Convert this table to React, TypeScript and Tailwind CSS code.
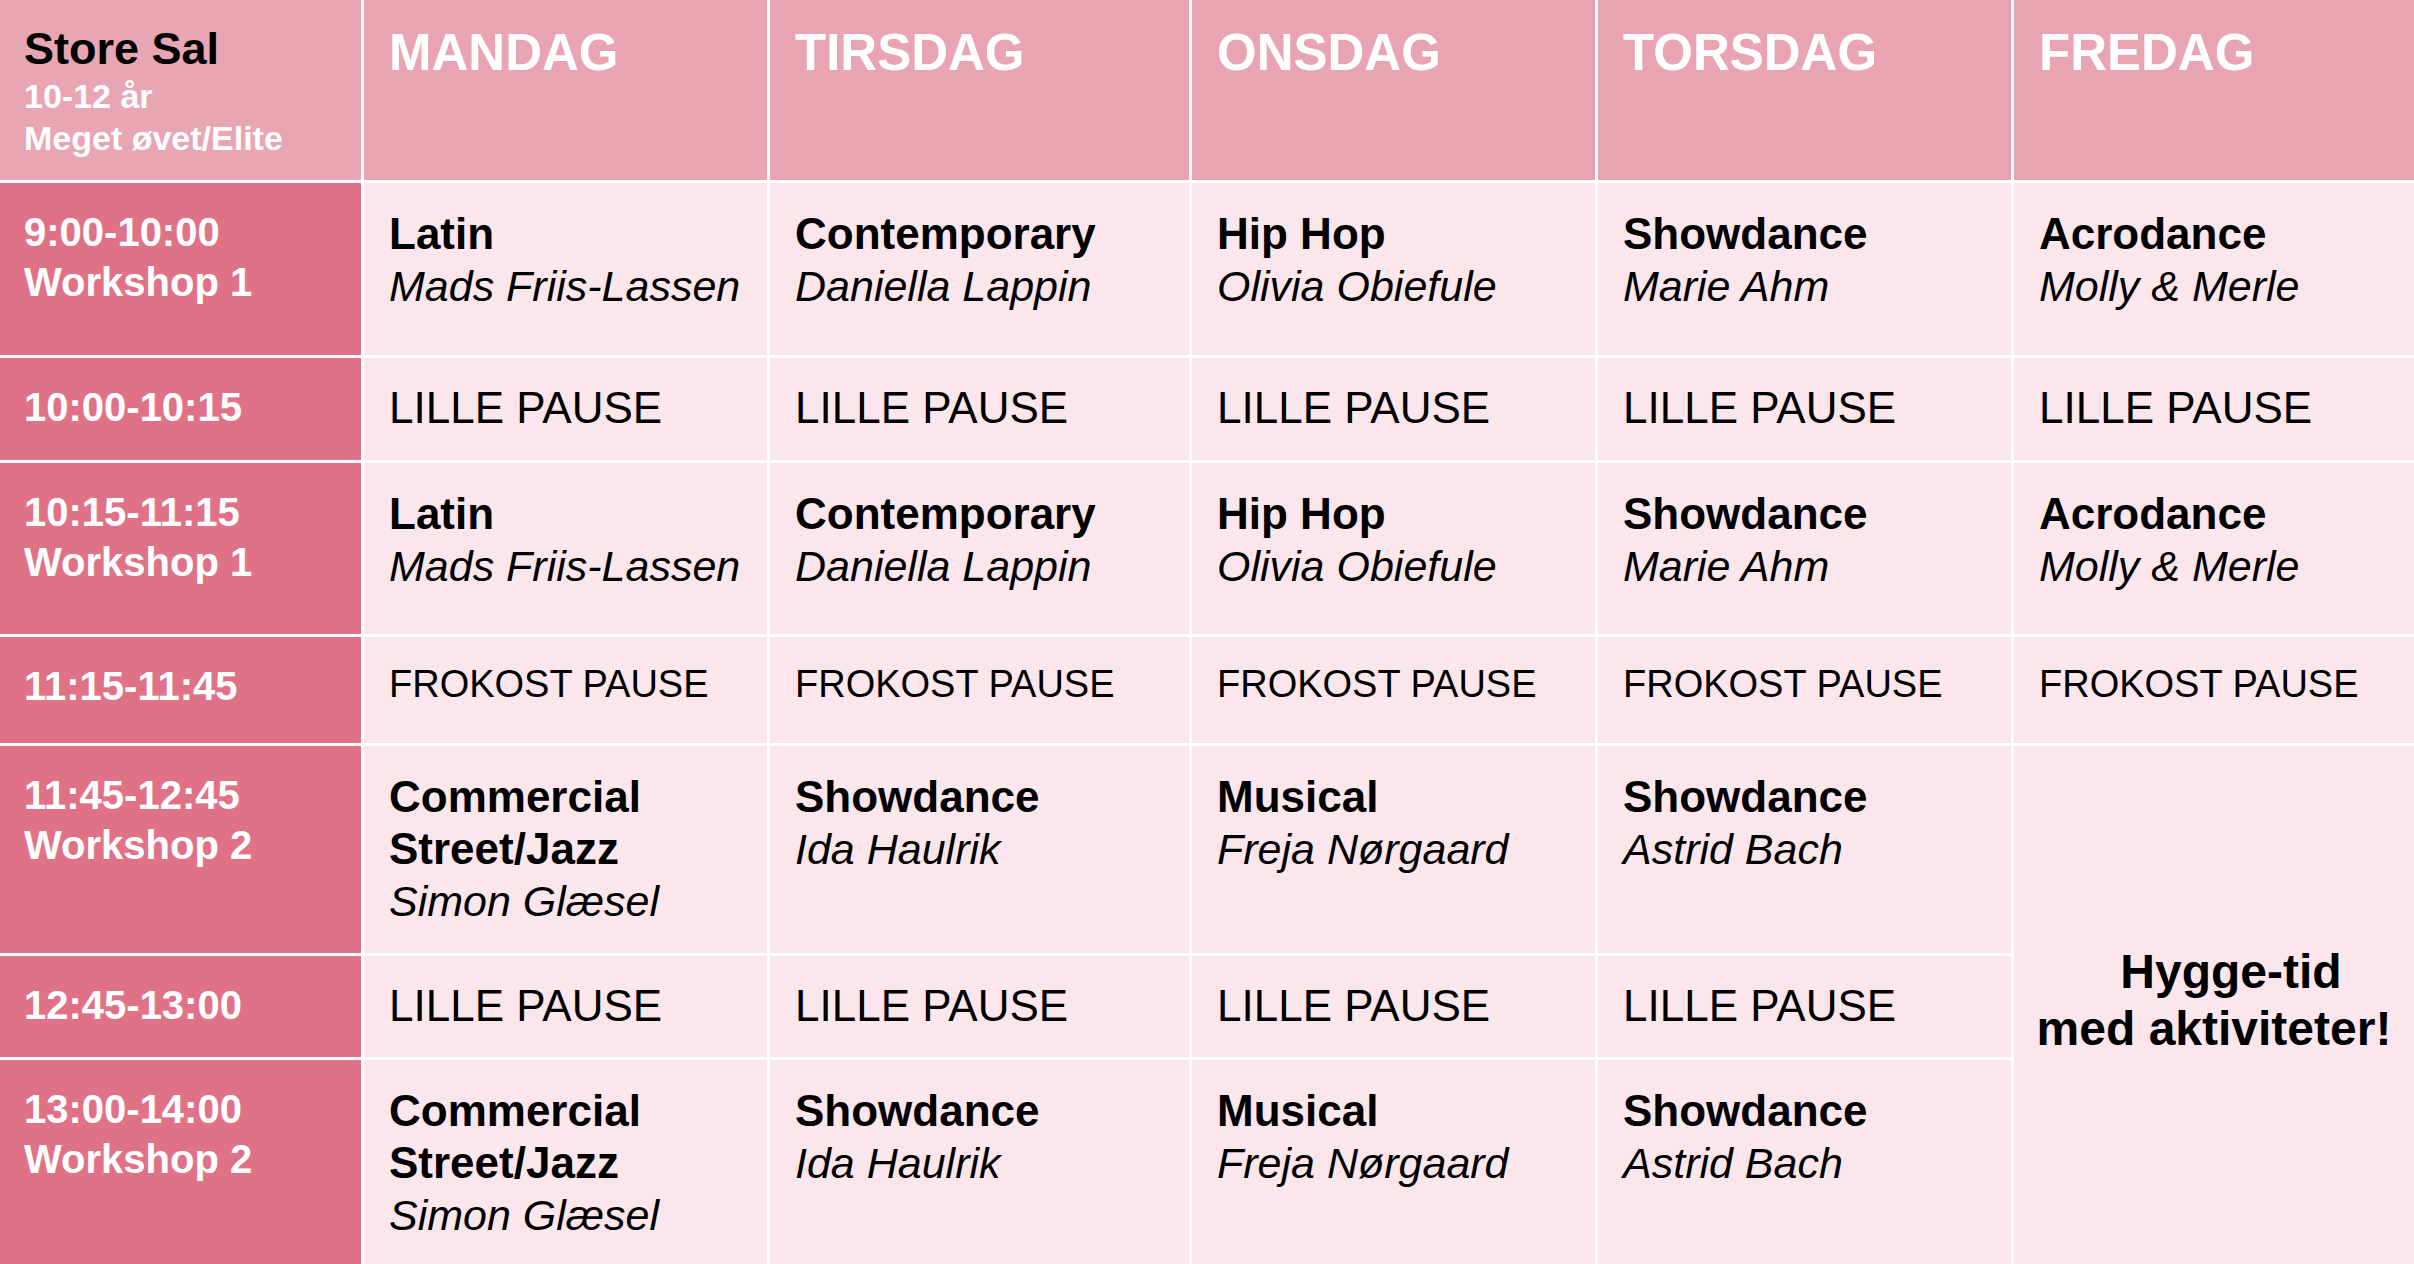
import React from "react";

type Cell =
  | { kind: "class"; title: string[]; teacher: string }
  | { kind: "pause" }
  | { kind: "lunch" };

interface Row {
  time: string;
  label?: string;
  cells: Cell[];
}

const days = ["MANDAG", "TIRSDAG", "ONSDAG", "TORSDAG", "FREDAG"];

const workshop1: Cell[] = [
  { kind: "class", title: ["Latin"], teacher: "Mads Friis-Lassen" },
  { kind: "class", title: ["Contemporary"], teacher: "Daniella Lappin" },
  { kind: "class", title: ["Hip Hop"], teacher: "Olivia Obiefule" },
  { kind: "class", title: ["Showdance"], teacher: "Marie Ahm" },
  { kind: "class", title: ["Acrodance"], teacher: "Molly & Merle" },
];

// fredag has no workshop 2, the hygge cell spans those rows
const workshop2: Cell[] = [
  { kind: "class", title: ["Commercial", "Street/Jazz"], teacher: "Simon Glæsel" },
  { kind: "class", title: ["Showdance"], teacher: "Ida Haulrik" },
  { kind: "class", title: ["Musical"], teacher: "Freja Nørgaard" },
  { kind: "class", title: ["Showdance"], teacher: "Astrid Bach" },
];

const pause5: Cell[] = Array(5).fill({ kind: "pause" });
const pause4: Cell[] = Array(4).fill({ kind: "pause" });
const lunch5: Cell[] = Array(5).fill({ kind: "lunch" });

const rows: Row[] = [
  { time: "9:00-10:00", label: "Workshop 1", cells: workshop1 },
  { time: "10:00-10:15", cells: pause5 },
  { time: "10:15-11:15", label: "Workshop 1", cells: workshop1 },
  { time: "11:15-11:45", cells: lunch5 },
  { time: "11:45-12:45", label: "Workshop 2", cells: workshop2 },
  { time: "12:45-13:00", cells: pause4 },
  { time: "13:00-14:00", label: "Workshop 2", cells: workshop2 },
];

function BodyCell({ cell }: { cell: Cell }) {
  if (cell.kind === "pause") {
    return (
      <div className="bg-[#fbe7eb] pl-[25px] pt-[24px] text-[44px] leading-[52px] text-black whitespace-nowrap">
        LILLE PAUSE
      </div>
    );
  }
  if (cell.kind === "lunch") {
    return (
      <div className="bg-[#fbe7eb] pl-[25px] pt-[24px] text-[38px] leading-[46px] text-black whitespace-nowrap">
        FROKOST PAUSE
      </div>
    );
  }
  return (
    <div className="bg-[#fbe7eb] pl-[25px] pt-[25px] text-black">
      {cell.title.map((t) => (
        <div key={t} className="text-[44px] leading-[52px] font-bold whitespace-nowrap">
          {t}
        </div>
      ))}
      <div className="text-[43px] leading-[52px] italic whitespace-nowrap">{cell.teacher}</div>
    </div>
  );
}

export default function App() {
  return (
    <div
      className="w-[2414px] h-[1264px] bg-white overflow-hidden"
      style={{ fontFamily: '"Liberation Sans", Arial, sans-serif' }}
    >
      <div className="grid h-full gap-[3px] grid-cols-[361px_403px_419px_403px_413px_400px] grid-rows-[180px_172px_102px_171px_106px_207px_101px_204px]">
        {/* corner */}
        <div className="bg-[#e8a5b3] pl-[24px] pt-[25px]">
          <div className="text-[45px] leading-[48px] font-bold text-black">Store Sal</div>
          <div className="mt-[2px] text-[34px] leading-[42px] font-bold text-white">10-12 år</div>
          <div className="text-[34px] leading-[42px] font-bold text-white whitespace-nowrap">
            Meget øvet/Elite
          </div>
        </div>

        {days.map((d) => (
          <div key={d} className="bg-[#e8a4b2] pl-[25px] pt-[23px]">
            <div className="text-[51px] leading-[60px] font-bold text-white">{d}</div>
          </div>
        ))}

        {rows.map((row, i) => (
          <React.Fragment key={i}>
            <div className="bg-[#df7287] pl-[24px] pt-[24px] text-white font-bold">
              <div className="text-[40px] leading-[50px]">{row.time}</div>
              {row.label && <div className="text-[40px] leading-[50px]">{row.label}</div>}
            </div>
            {row.cells.map((c, j) => (
              <BodyCell key={j} cell={c} />
            ))}
          </React.Fragment>
        ))}

        {/* fredag eftermiddag */}
        <div className="col-start-6 row-start-6 row-span-3 bg-[#fbe7eb] flex items-center justify-center">
          <div className="text-center text-[48px] leading-[57px] font-bold text-black pb-[10px]">
            <div className="pl-[34px]">Hygge-tid</div>
            <div className="whitespace-nowrap">med aktiviteter!</div>
          </div>
        </div>
      </div>
    </div>
  );
}
